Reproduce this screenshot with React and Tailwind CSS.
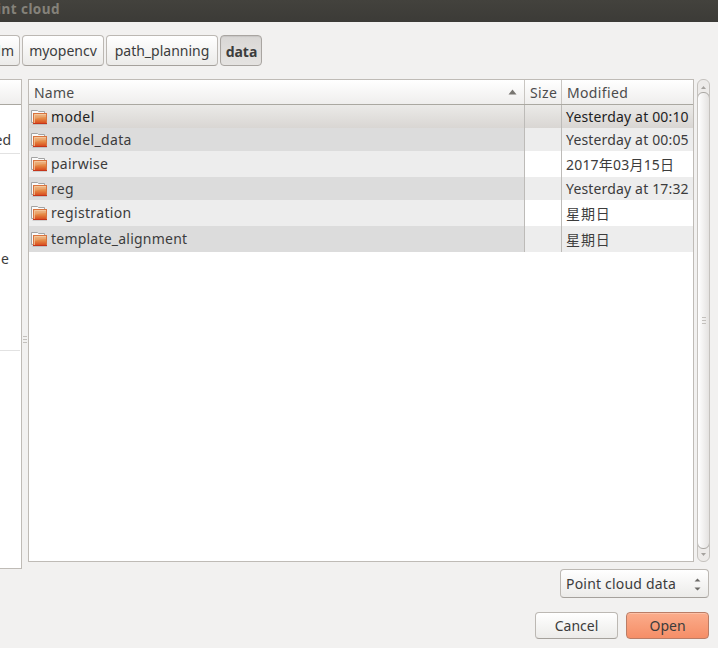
import React from "react";

const FONT = "font-['Noto_Sans','Noto_Sans_CJK_SC',sans-serif]";

const ROWS = [
  { name: "model", date: "Yesterday at 00:10", h: "h-[23px]", bg: "bg-linear-to-b from-[#ebeae8] to-[#d9d6d3] text-[#1e1e1e]", cell: "", nameT: "tracking-[0.4px]", dateT: "tracking-[0.16px]" },
  { name: "model_data", date: "Yesterday at 00:05", h: "h-[23px]", bg: "bg-[#ededed]", cell: "bg-[#dcdcdc]", nameT: "tracking-[0.35px]", dateT: "tracking-[0.16px]" },
  { name: "pairwise", date: "2017年03月15日", h: "h-[26px]", bg: "bg-white", cell: "bg-[#ededed]", nameT: "tracking-[0.25px]", dateT: "tracking-[0.2px] pt-[2px]" },
  { name: "reg", date: "Yesterday at 17:32", h: "h-[23px]", bg: "bg-[#ededed]", cell: "bg-[#dcdcdc]", nameT: "tracking-[0.3px]", dateT: "tracking-[0.16px]" },
  { name: "registration", date: "星期日", h: "h-[26px]", bg: "bg-white", cell: "bg-[#ededed]", nameT: "tracking-[0.33px]", dateT: "tracking-[0.9px] pt-[2px]" },
  { name: "template_alignment", date: "星期日", h: "h-[26px]", bg: "bg-[#ededed]", cell: "bg-[#dcdcdc]", nameT: "tracking-[0.22px]", dateT: "tracking-[0.9px] pt-[2px]" },
];

function Folder() {
  return (
    <svg width="17" height="16" viewBox="0 0 17 16" className="block shrink-0">
      <defs>
        <linearGradient id="folder" x1="0" y1="0" x2="0" y2="1">
          <stop offset="0" stopColor="#ecb27c" />
          <stop offset="0.5" stopColor="#e58a45" />
          <stop offset="1" stopColor="#d8481b" />
        </linearGradient>
      </defs>
      <path d="M0.5 13.5V1.5H6.5L7.5 2.5H13.5V5" fill="#fafafa" stroke="#a3a3a3" />
      <path d="M0.5 13.5H3" stroke="#a3a3a3" />
      <path d="M1.5 15.5H16" stroke="#000" strokeOpacity="0.12" />
      <rect x="2.5" y="4.5" width="13" height="10" fill="url(#folder)" stroke="#d8743f" />
      <path d="M3.5 14V5.5H15" fill="none" stroke="#f7d5b1" strokeOpacity="0.65" />
      <path d="M4 6H15V8Q9 8 4 10Z" fill="#fff" fillOpacity="0.12" />
      <path d="M2 14.5H16" stroke="#c5351a" />
    </svg>
  );
}

const BTN = "flex items-center rounded-[4px] border border-[#bcb8b3] border-b-[#a5a19c] bg-linear-to-b from-white to-[#ecebe9] whitespace-nowrap";

function Grip() {
  return (
    <div className="flex flex-col gap-[2px]">
      <i className="h-px w-[4px] bg-[#c3c0bc]" />
      <i className="h-px w-[4px] bg-[#c3c0bc]" />
      <i className="h-px w-[4px] bg-[#c3c0bc]" />
    </div>
  );
}

export default function App() {
  return (
    <div className={`flex h-[648px] w-[718px] flex-col overflow-hidden bg-[#f2f1f0] text-[14px] leading-[20px] text-[#3c3c3c] ${FONT}`}>
      <header className="flex h-[22px] shrink-0 items-start bg-linear-to-b from-[#43423d] to-[#3c3b37]">
        <span className="-ml-[3px] -mt-px whitespace-nowrap text-[13.5px] font-bold tracking-[0.45px] text-[#85827a]">int cloud</span>
      </header>

      <nav className="mt-[13px] flex h-[31px] shrink-0 gap-[2px]">
        <div className={`${BTN} -ml-[20px] w-[40px] justify-end pr-[5px]`}>lm</div>
        <div className={`${BTN} w-[82px] justify-center`}>myopencv</div>
        <div className={`${BTN} w-[112px] justify-center`}>path_planning</div>
        <div className="flex w-[42px] items-center justify-center rounded-[4px] border border-[#a9a5a1] bg-linear-to-b from-[#d9d7d5] to-[#e5e3e1] pt-[2px] pl-px font-bold shadow-[inset_0_1px_1px_rgba(0,0,0,0.08)]">data</div>
      </nav>

      <main className="mt-[13px] flex h-[490px] shrink-0">
        <aside className="flex h-[490px] w-[22px] flex-col border-y border-r border-[#bfbbb6] bg-white">
          <div className="h-[25px] border-b border-[#aaa8a1] bg-linear-to-b from-white to-[#efeeed]" />
          <div className="flex h-[49px] w-[20px] items-end justify-end border-b border-[#e2e2e2] pr-[9px] pb-[3px]">ed</div>
          <div className="flex h-[197px] w-[20px] justify-end border-b border-[#e2e2e2] pt-[95px] pr-[11px]">e</div>
        </aside>
        <div className="flex h-[483px] w-[6px] items-center justify-center pt-[37px]">
          <Grip />
        </div>

        <section className="flex h-[483px] w-[666px] flex-col border border-[#bfbbb6] bg-white">
          <div className="flex h-[25px] shrink-0 border-b border-[#aaa8a1] bg-linear-to-b from-white to-[#efeeed] text-[#4c4c4c]">
            <div className="flex w-[496px] items-center justify-between border-r border-[#c9c6c2] pr-[7px] pl-[5px]">
              <span className="pt-[2px] tracking-[0.2px]">Name</span>
              <svg width="9" height="6" viewBox="0 0 9 6"><path d="M0.5 5.5L4.5 0.5L8.5 5.5Z" fill="#777570" /></svg>
            </div>
            <div className="flex w-[37px] items-center border-r border-[#c9c6c2] pt-[2px] pl-[5px] tracking-[0.35px]">Size</div>
            <div className="flex items-center pt-[2px] pl-[5px] tracking-[0.35px]">Modified</div>
          </div>
          {ROWS.map((r) => (
            <div key={r.name} className={`flex shrink-0 ${r.h} ${r.bg}`}>
              <div className={`flex w-[496px] items-center gap-[3px] border-r border-[#bdbbb8] pl-[2px] ${r.cell}`}>
                <Folder />
                <span className={r.nameT}>{r.name}</span>
              </div>
              <div className="w-[37px] border-r border-[#bdbbb8]" />
              <div className={`flex items-center pl-[4px] whitespace-nowrap ${r.dateT}`}>{r.date}</div>
            </div>
          ))}
        </section>

        <div className="ml-[3px] flex h-[483px] w-[13px] flex-col items-center overflow-hidden rounded-[6px] border border-[#c5c2be] bg-[#edebe9]">
          <div className="flex h-[12px] shrink-0 items-center pt-[2px]">
            <svg width="5" height="3" viewBox="0 0 5 3"><path d="M0 3L2.5 0L5 3Z" fill="#a5a29e" /></svg>
          </div>
          <div className="-mx-px flex w-[13px] flex-1 items-center justify-center rounded-[6px] border border-[#aaa7a3] bg-linear-to-r from-white to-[#e4e2e0]">
            <Grip />
          </div>
          <div className="flex h-[12px] shrink-0 items-center pb-[2px]">
            <svg width="5" height="3" viewBox="0 0 5 3"><path d="M0 0L2.5 3L5 0Z" fill="#a5a29e" /></svg>
          </div>
        </div>
      </main>

      <footer className="flex flex-col items-end gap-[14px] pr-[9px]">
        <div className={`${BTN} h-[29px] w-[149px] justify-between pr-[7px] pl-[5px]`}>
          <span className="tracking-[0.2px]">Point cloud data</span>
          <svg width="7" height="13" viewBox="0 0 7 13" className="mt-[2px]"><path d="M0.5 3.5L3.5 0.5L6.5 3.5ZM0.5 9.5L3.5 12.5L6.5 9.5Z" fill="#6b6966" /></svg>
        </div>
        <div className="flex h-[27px] gap-[8px]">
          <div className={`${BTN} w-[83px] justify-center`}>Cancel</div>
          <div className="flex w-[83px] items-center justify-center rounded-[4px] border border-[#ba7d66] bg-linear-to-b from-[#fbac8b] to-[#f58e67] shadow-[inset_0_1px_0_#fdc0a6]">Open</div>
        </div>
      </footer>
    </div>
  );
}
